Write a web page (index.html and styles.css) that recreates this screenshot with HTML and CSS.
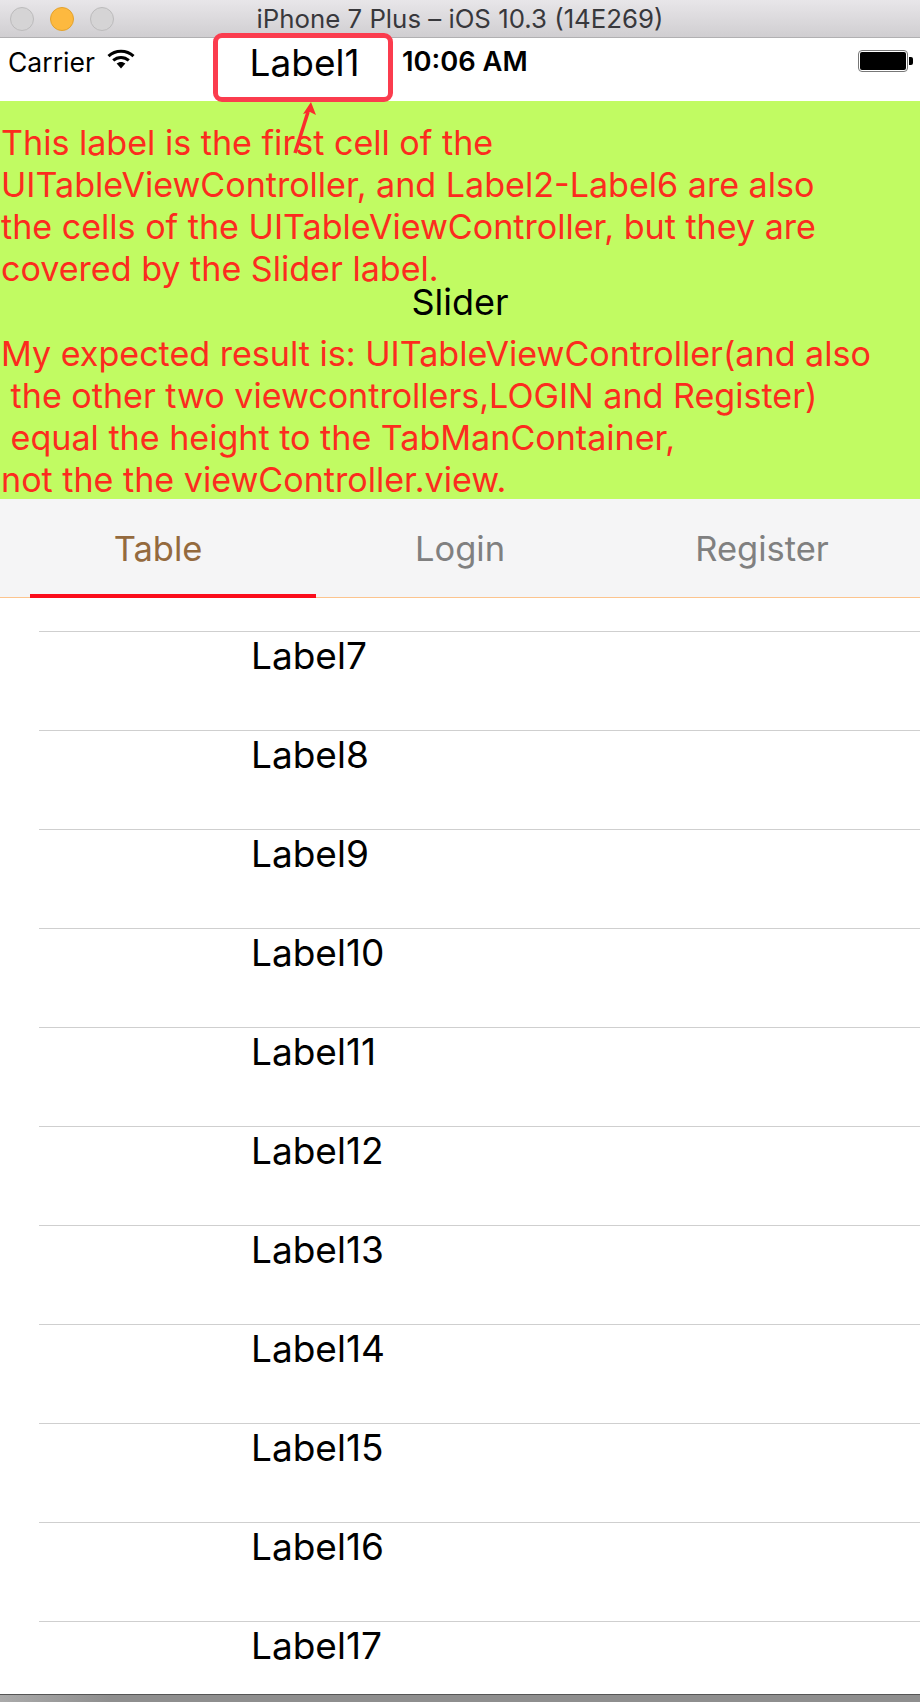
FILE: index.html
```html
<!DOCTYPE html>
<html lang="en">
<head>
  <meta charset="UTF-8">
  <meta name="viewport" content="width=device-width, initial-scale=1.0">
  <title>iPhone 7 Plus Simulator</title>
  <link rel="stylesheet" href="styles.css">
</head>
<body>

  <div class="titlebar">
    <div class="lights">
      <span class="light"></span>
      <span class="light light-yellow"></span>
      <span class="light"></span>
    </div>
    <div class="window-title">iPhone 7 Plus – iOS 10.3 (14E269)</div>
  </div>

  <div class="statusbar">
    <div class="carrier">
      <span>Carrier</span>
      <svg class="wifi" viewBox="0 0 28 20" width="28" height="20">
        <path d="M1.5 7.2 C8.5 .6 19.5 .6 26.5 7.2" fill="none" stroke="#000" stroke-width="3"/>
        <path d="M6.2 11.4 C10.8 7.4 17.2 7.4 21.8 11.4" fill="none" stroke="#000" stroke-width="3"/>
        <path d="M9.6 14.6 C12.2 12.4 15.8 12.4 18.4 14.6 L14 19.4 Z" fill="#000"/>
      </svg>
    </div>
    <div class="time">10:06 AM</div>
    <div class="battery"><span class="battery-fill"></span><span class="battery-nub"></span></div>
    <div class="first-cell">Label1</div>
    <svg class="arrow" viewBox="0 0 40 60" width="40" height="60">
      <path d="M9 53 L22 12" stroke="#fb2d2d" stroke-width="3.5" fill="none"/>
      <path d="M25 2 L30 15 L24 12 L17 14 Z" fill="#fb2d2d"/>
    </svg>
  </div>

  <div class="header">
    <p class="note">This label is the first cell of the
UITableViewController, and Label2-Label6 are also
the cells of the UITableViewController, but they are
covered by the Slider label.</p>
    <div class="slider-label">Slider</div>
    <p class="note">My expected result is: UITableViewController(and also
 the other two viewcontrollers,LOGIN and Register)
 equal the height to the TabManContainer,
not the the viewController.view.</p>
  </div>

  <div class="tabs">
    <div class="tab tab-active">Table</div>
    <div class="tab">Login</div>
    <div class="tab">Register</div>
    <span class="tab-indicator"></span>
  </div>

  <div class="table">
    <div class="cell">Label7</div>
    <div class="cell">Label8</div>
    <div class="cell">Label9</div>
    <div class="cell">Label10</div>
    <div class="cell">Label11</div>
    <div class="cell">Label12</div>
    <div class="cell">Label13</div>
    <div class="cell">Label14</div>
    <div class="cell">Label15</div>
    <div class="cell">Label16</div>
    <div class="cell">Label17</div>
  </div>

  <div class="window-bottom"></div>

</body>
</html>
```

FILE: styles.css
```css
html, body {
  margin: 0;
  padding: 0;
}

body {
  width: 920px;
  height: 1702px;
  overflow: hidden;
  font-family: Inter, "Liberation Sans", sans-serif;
  background: #fff;
  color: #000;
  display: flex;
  flex-direction: column;
}

.titlebar {
  height: 38px;
  flex: none;
  box-sizing: border-box;
  display: flex;
  align-items: center;
  position: relative;
  background: linear-gradient(#e8e6e9, #d0ced1);
  border-bottom: 1px solid #b1b0b2;
}

.lights {
  display: flex;
  gap: 16px;
  padding-left: 10px;
}

.light {
  width: 24px;
  height: 24px;
  box-sizing: border-box;
  border-radius: 50%;
  background: #d5d4d5;
  border: 1px solid #bcbbbc;
}

.light-yellow {
  background: #fdb93f;
  border-color: #e3a22e;
}

.window-title {
  position: absolute;
  left: 0;
  right: 0;
  text-align: center;
  font-size: 25.8px;
  color: #38383c;
}

.statusbar {
  height: 63px;
  flex: none;
  display: flex;
  align-items: flex-start;
  position: relative;
  padding-top: 9px;
  box-sizing: border-box;
}

.carrier {
  width: 402px;
  box-sizing: border-box;
  flex: none;
  display: flex;
  align-items: center;
  gap: 12px;
  padding-left: 8px;
  font-size: 26.5px;
  line-height: 30px;
}

.wifi {
  margin-top: -6px;
}

.time {
  font-size: 27.3px;
  font-weight: 600;
  line-height: 30px;
}

.battery {
  margin-left: auto;
  margin-right: 12px;
  margin-top: 3px;
  width: 50px;
  height: 22px;
  box-sizing: border-box;
  border: 1px solid #777;
  border-radius: 4px;
  padding: 1px;
  position: relative;
}

.battery-fill {
  display: block;
  height: 100%;
  background: #000;
  border-radius: 2px;
}

.battery-nub {
  position: absolute;
  right: -6px;
  top: 6px;
  width: 4px;
  height: 8px;
  background: #000;
  border-radius: 0 2px 2px 0;
}

.first-cell {
  position: absolute;
  left: 213px;
  top: -5px;
  width: 180px;
  height: 69px;
  box-sizing: border-box;
  border: 5px solid #fb3c4e;
  border-radius: 9px;
  background: #fff;
  font-size: 37px;
  line-height: 46px;
  padding: 2px 0 0 3px;
  text-align: center;
}

.arrow {
  position: absolute;
  left: 286px;
  top: 62px;
  z-index: 2;
}

.header {
  height: 398px;
  flex: none;
  background: #c1fb62;
  padding-top: 21px;
  box-sizing: border-box;
}

.note {
  margin: 0;
  padding-left: 1px;
  font-size: 34.1px;
  line-height: 42px;
  color: #fc2c1e;
  white-space: pre;
}

.slider-label {
  font-size: 36px;
  line-height: 42px;
  text-align: center;
  margin: -9px 0 10px;
}

.tabs {
  height: 99px;
  flex: none;
  box-sizing: border-box;
  padding: 0 7px;
  display: grid;
  grid-template-columns: repeat(3, 1fr);
  background: #f5f5f6;
  border-bottom: 1px solid #fcc48e;
  position: relative;
}

.tab {
  text-align: center;
  font-size: 34.5px;
  line-height: 100px;
  color: #808080;
}

.tab-active {
  color: #946a3e;
}

.tab-indicator {
  position: absolute;
  left: 30px;
  bottom: -1px;
  width: 286px;
  height: 4px;
  background: #fb0d1b;
}

.table {
  flex: 1;
  padding-top: 33px;
  overflow: hidden;
}

.cell {
  height: 99px;
  box-sizing: border-box;
  margin-left: 39px;
  padding-left: 212px;
  border-top: 1px solid #cfcfcf;
  font-size: 37px;
  line-height: 48px;
}

.window-bottom {
  height: 8px;
  flex: none;
  background: linear-gradient(90deg, #aaa, #8e8e8e 12%, #8e8e8e);
  border-top: 1px solid #555;
  box-sizing: border-box;
}
```
